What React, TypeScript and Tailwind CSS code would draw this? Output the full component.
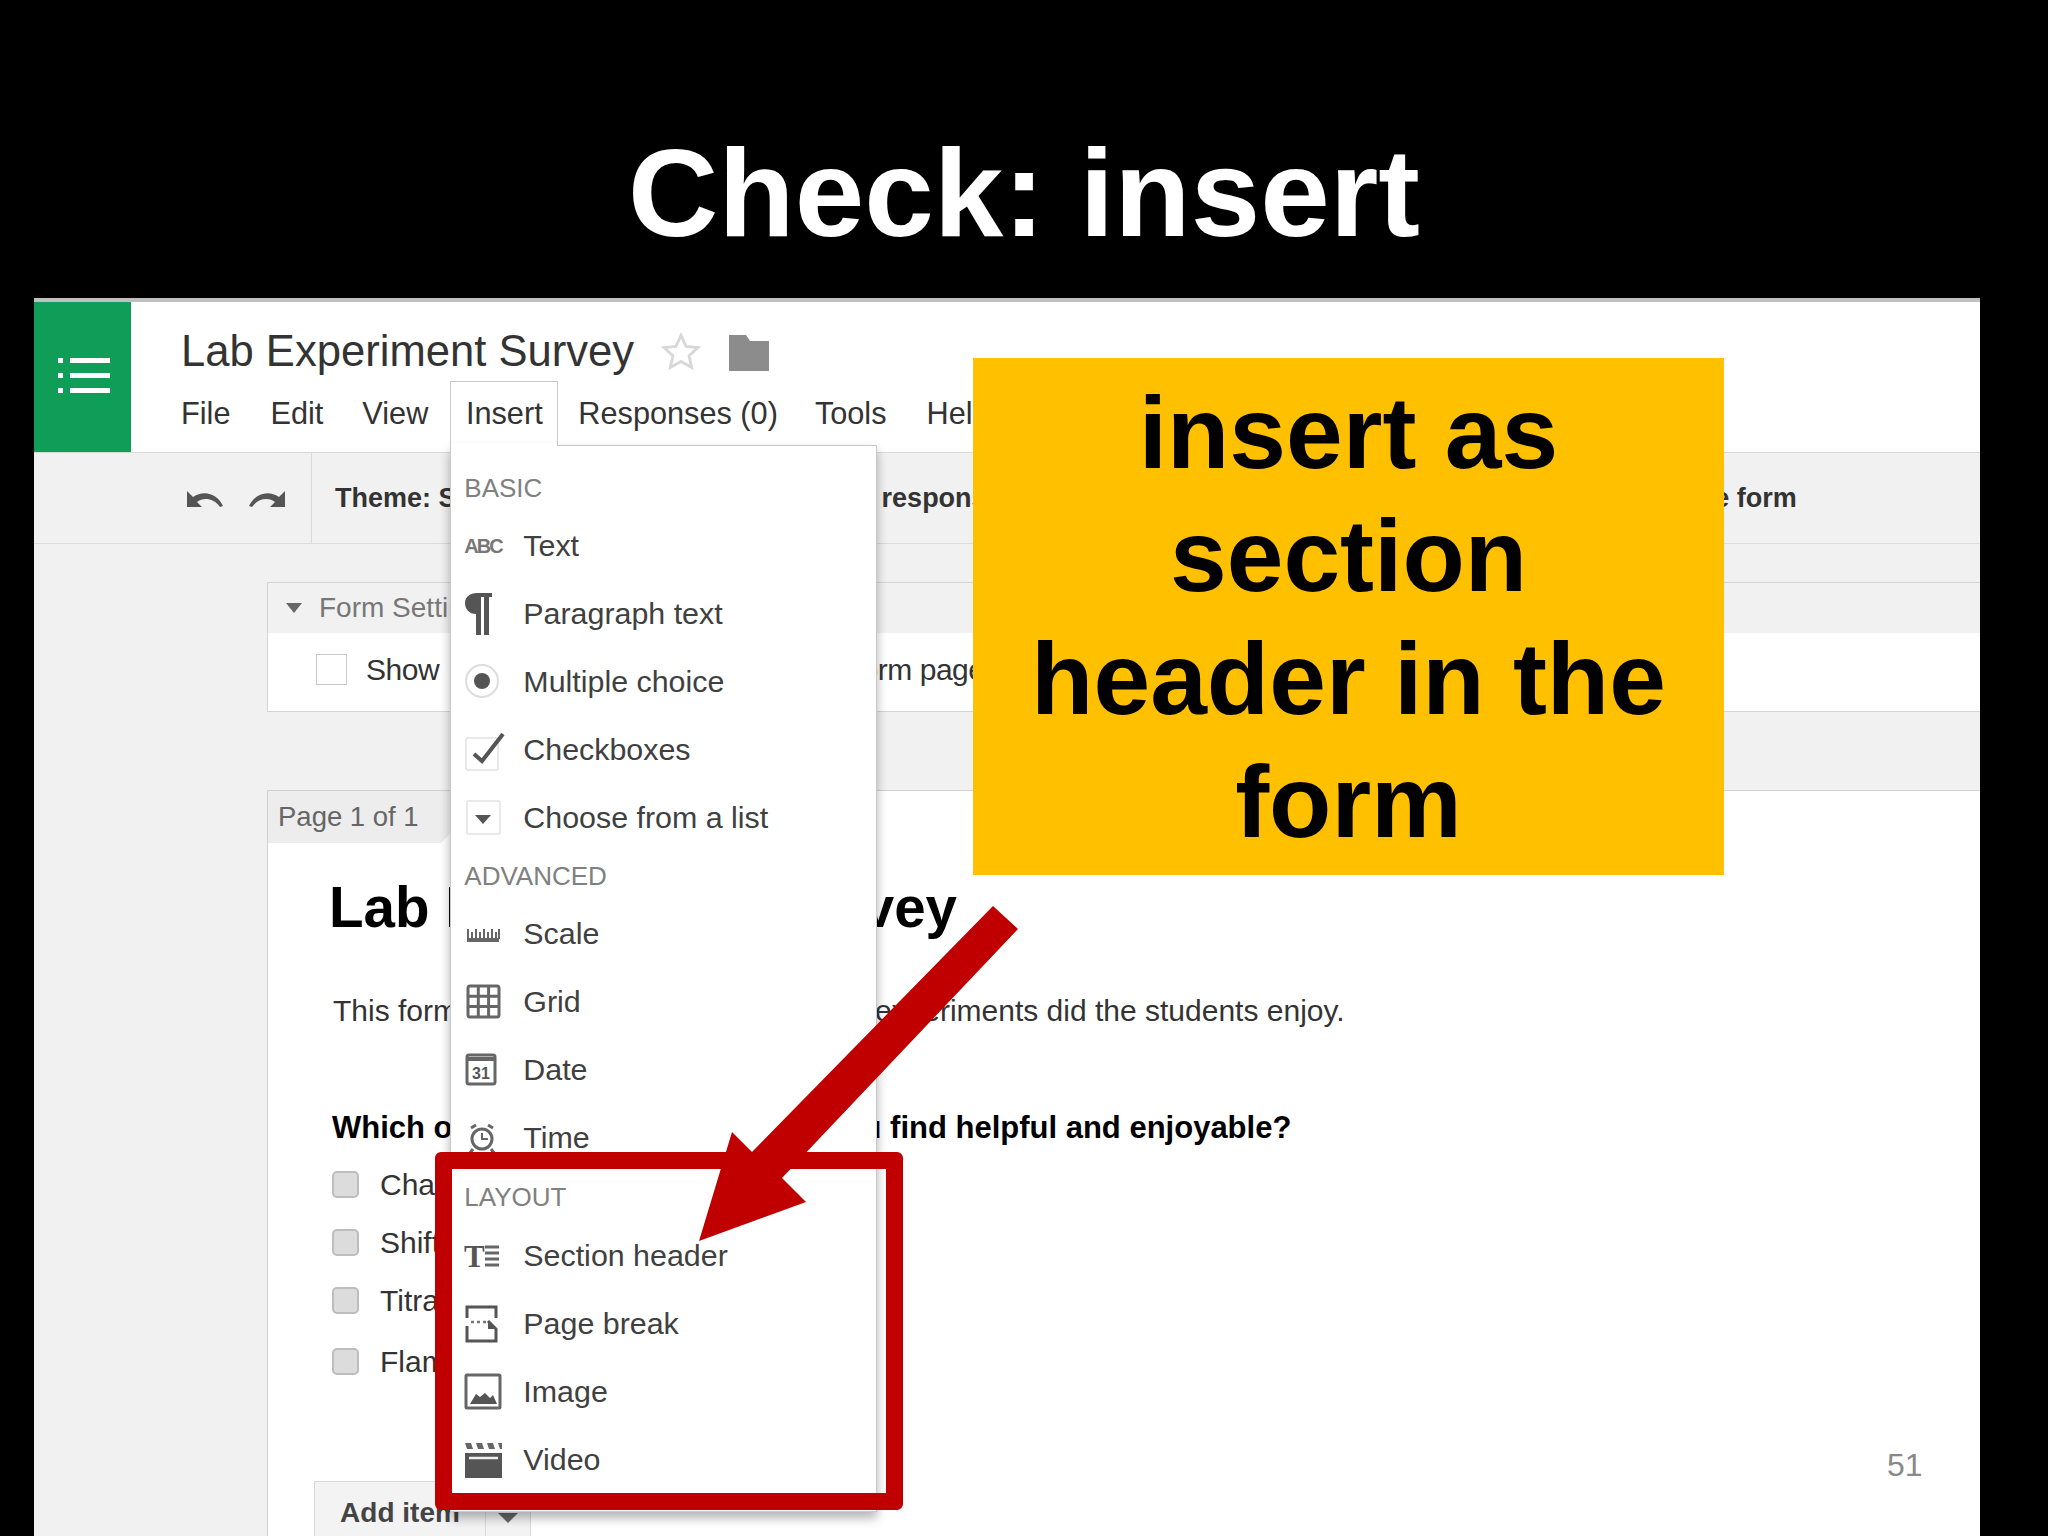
import { type ReactNode } from "react";

const IconAbc = () => (
  <span className="block w-[38px] font-bold text-[20px] leading-none tracking-[-2px] text-[#777]">ABC</span>
);

const IconParagraph = () => (
  <svg width="38" height="44" viewBox="0 0 38 44" className="block">
    <path d="M13 1h15v4h-3v38h-5V5h-3v38h-5V22C5 22 1 17 1 11S6 1 13 1z" fill="#555" />
  </svg>
);

const IconRadio = () => (
  <svg width="38" height="38" viewBox="0 0 38 38" className="block">
    <circle cx="18" cy="18" r="16" fill="#fff" stroke="#ddd" strokeWidth="2" />
    <circle cx="18" cy="18" r="8" fill="#555" />
  </svg>
);

const IconCheck = () => (
  <svg width="42" height="42" viewBox="0 0 42 42" className="block">
    <rect x="2" y="9" width="32" height="32" rx="2" fill="#fff" stroke="#e2e2e2" strokeWidth="1.5" />
    <path d="M10 25l8 7L39 5" fill="none" stroke="#555" strokeWidth="4" />
  </svg>
);

const IconSelect = () => (
  <svg width="38" height="38" viewBox="0 0 38 38" className="block">
    <rect x="3" y="2" width="33" height="33" rx="1" fill="#fff" stroke="#e2e2e2" strokeWidth="1.5" />
    <path d="M11 16h16l-8 9z" fill="#555" />
  </svg>
);

const IconScale = () => (
  <svg width="38" height="20" viewBox="0 0 38 20" className="block">
    <path d="M3 16h32" stroke="#666" strokeWidth="4" />
    <path
      d="M4 5v10M8 8v7M12 5v10M16 8v7M20 5v10M24 8v7M28 5v10M32 8v7M35 5v10"
      stroke="#666"
      strokeWidth="2"
    />
  </svg>
);

const IconGrid = () => (
  <svg width="38" height="38" viewBox="0 0 38 38" className="block">
    <rect x="4" y="3" width="31" height="31" rx="2" fill="none" stroke="#666" strokeWidth="3" />
    <path d="M14.3 3v31M24.6 3v31M4 13.3h31M4 23.6h31" stroke="#666" strokeWidth="3" />
  </svg>
);

const IconDate = () => (
  <svg width="38" height="38" viewBox="0 0 38 38" className="block">
    <rect x="3" y="4" width="28" height="29" rx="2" fill="#fff" stroke="#666" strokeWidth="3" />
    <path d="M3 8h28" stroke="#666" strokeWidth="4" />
    <text x="17" y="28" textAnchor="middle" fontSize="16" fontWeight="700" fill="#555" fontFamily="Liberation Sans">
      31
    </text>
  </svg>
);

const IconTime = () => (
  <svg width="38" height="38" viewBox="0 0 38 38" className="block">
    <circle cx="18" cy="20" r="10" fill="#fff" stroke="#666" strokeWidth="3" />
    <path d="M18 14v6h6" fill="none" stroke="#666" strokeWidth="2" />
    <path d="M7 9l5-3M29 9l-5-3M9 30l-3 4M27 30l3 4" stroke="#666" strokeWidth="3" />
  </svg>
);

const IconSection = () => (
  <svg width="38" height="28" viewBox="0 0 38 28" className="block">
    <text x="0" y="25" fontSize="31" fontWeight="700" fill="#555" fontFamily="Liberation Serif">
      T
    </text>
    <path d="M21 5h14M21 11h14M21 17h14M21 23h14" stroke="#666" strokeWidth="3" />
  </svg>
);

const IconPageBreak = () => (
  <svg width="38" height="38" viewBox="0 0 38 38" className="block">
    <path d="M3 13V2h29v11M3 21v15h29V24l-8-8" fill="none" stroke="#555" strokeWidth="3" />
    <path d="M7 17h3M13 17h3M19 17h3" stroke="#777" strokeWidth="2.5" />
    <path d="M24 16v8h8z" fill="#555" />
  </svg>
);

const IconImage = () => (
  <svg width="38" height="38" viewBox="0 0 38 38" className="block">
    <rect x="2" y="2" width="34" height="33" rx="1" fill="#fff" stroke="#666" strokeWidth="3" />
    <path d="M6 31l6-10 4 3 5-4 5 5 3-3 4 9z" fill="#555" />
  </svg>
);

const IconVideo = () => (
  <svg width="38" height="38" viewBox="0 0 38 38" className="block">
    <path d="M1 12h37v25H1z" fill="#555" />
    <path d="M1 2l6 0 2 6H3zM12 2h6l2 6h-6zM23 2h6l2 6h-6zM34 2h4v6h-2z" fill="#666" />
    <path d="M5 17h29" stroke="#eee" strokeWidth="2.5" />
  </svg>
);

const UndoArrow = ({ className }: { className?: string }) => (
  <svg width="36" height="18" viewBox="0 0 36 18" className={className}>
    <path d="M0 2v16h15l-5-5c6-5 17-4 23 5l3-1C31 6 18 0 6 8z" fill="#555" />
  </svg>
);

const MenuHeading = ({ label, height }: { label: string; height: string }) => (
  <div className={`flex items-center pl-[13px] text-[26px] text-[#808080] ${height}`}>{label}</div>
);

const MenuItem = ({ icon, label }: { icon: ReactNode; label: string }) => (
  <div className="flex h-[68px] items-center text-[30.4px] text-[#404040]">
    <div className="flex w-[72px] shrink-0 justify-start pl-[13px]">{icon}</div>
    <span>{label}</span>
  </div>
);

const InsertMenu = () => (
  <div className="absolute left-[-1px] top-[63px] z-10 h-[1067px] w-[427px] border border-[#c8c8c8] bg-white pt-[18px] shadow-[0_6px_10px_rgba(0,0,0,0.3)]">
    <MenuHeading label="BASIC" height="h-[48px]" />
    <MenuItem icon={<IconAbc />} label="Text" />
    <MenuItem icon={<IconParagraph />} label="Paragraph text" />
    <MenuItem icon={<IconRadio />} label="Multiple choice" />
    <MenuItem icon={<IconCheck />} label="Checkboxes" />
    <MenuItem icon={<IconSelect />} label="Choose from a list" />
    <MenuHeading label="ADVANCED" height="h-[48px]" />
    <MenuItem icon={<IconScale />} label="Scale" />
    <MenuItem icon={<IconGrid />} label="Grid" />
    <MenuItem icon={<IconDate />} label="Date" />
    <MenuItem icon={<IconTime />} label="Time" />
    <MenuHeading label="LAYOUT" height="h-[50px]" />
    <MenuItem icon={<IconSection />} label="Section header" />
    <MenuItem icon={<IconPageBreak />} label="Page break" />
    <MenuItem icon={<IconImage />} label="Image" />
    <MenuItem icon={<IconVideo />} label="Video" />
  </div>
);

const Header = () => (
  <div className="flex h-[151px] border-b border-[#d9d9d9] bg-white">
    <div className="flex w-[97px] shrink-0 items-center justify-center bg-[#0f9d58]">
      <svg width="52" height="35" viewBox="0 0 52 35" className="mb-[4px] ml-[3px]">
        <path d="M0 2.5h5M0 17.5h5M0 32.5h5M12 2.5h40M12 17.5h40M12 32.5h40" stroke="#fff" strokeWidth="5" />
      </svg>
    </div>
    <div className="flex-1 pl-[50px] text-[#333]">
      <div className="flex h-[79px] items-center pt-[20px]">
        <span className="text-[43.6px] leading-none">Lab Experiment Survey</span>
        <svg width="42" height="42" viewBox="0 0 24 24" className="ml-[26px]">
          <path
            d="M12 2.5l2.9 6.3 6.8.7-5.1 4.6 1.5 6.8-6.1-3.5-6.1 3.5 1.5-6.8L2.3 9.5l6.8-.7z"
            fill="#fff"
            stroke="#d8d8d8"
            strokeWidth="1.6"
          />
        </svg>
        <svg width="40" height="36" viewBox="0 0 40 36" className="ml-[27px] mt-[2px]">
          <path d="M0 0h17l4 6h19v30H0z" fill="#8c8c8c" />
        </svg>
      </div>
      <nav className="flex h-[66px] items-center text-[30.7px]">
        <span>File</span>
        <span className="ml-[40px]">Edit</span>
        <span className="ml-[39px]">View</span>
        <div className="relative z-20 ml-[22px] flex h-[64px] w-[108px] self-start items-center justify-center border border-b-0 border-[#c8c8c8] bg-white pt-[2px]">
          <span className="relative z-20">Insert</span>
          <InsertMenu />
          <div className="absolute bottom-[-2px] left-0 z-20 h-[4px] w-full bg-white" />
        </div>
        <span className="ml-[20px]">Responses (0)</span>
        <span className="ml-[37px]">Tools</span>
        <span className="ml-[40px]">Help</span>
      </nav>
    </div>
  </div>
);

const Toolbar = () => (
  <div className="flex h-[91px] items-center border-b border-[#dcdcdc] bg-[#f1f1f1] text-[27px] font-bold text-[#333]">
    <div className="flex h-full w-[278px] shrink-0 items-center gap-[26px] border-r border-[#d9d9d9] pl-[153px]">
      <UndoArrow />
      <UndoArrow className="-scale-x-100" />
    </div>
    <span className="ml-[23px]">Theme: Simple</span>
    <span className="ml-[299px]">See responses</span>
    <span className="ml-[599px]">View live form</span>
  </div>
);

const FormSettings = () => (
  <div className="h-[130px] border border-r-0 border-[#d4d4d4] bg-white">
    <div className="flex h-[50px] items-center bg-[#f1f1f1] pl-[18px] text-[28px] text-[#777]">
      <div className="h-0 w-0 border-x-[8px] border-t-[10px] border-x-transparent border-t-[#666]" />
      <span className="ml-[17px]">Form Settings</span>
    </div>
    <div className="flex h-[72px] items-center pl-[48px] text-[30px] tracking-[-0.47px] text-[#333]">
      <div className="h-[31px] w-[31px] border border-[#c8c8c8] bg-white" />
      <span className="ml-[19px]">Show</span>
      <span className="ml-[11px]">a progress bar at the bottom of form pages</span>
    </div>
  </div>
);

const Option = ({ label, className }: { label: string; className: string }) => (
  <div className={`flex h-[40px] items-center text-[30px] text-[#333] ${className}`}>
    <div className="h-[27px] w-[27px] rounded-[5px] border-2 border-[#bdbdbd] bg-[#dcdcdc]" />
    <span className="ml-[21px]">{label}</span>
  </div>
);

const PageCard = () => (
  <div className="mt-[78px] h-[746px] border-l border-t border-[#d0d0d0] bg-white">
    <div className="flex h-[52px] w-[225px] items-center bg-[#ededed] pl-[10px] text-[27.5px] text-[#666] [clip-path:polygon(0_0,100%_0,173px_100%,0_100%)]">
      Page 1 of 1
    </div>
    <div className="pl-[64px]">
      <h1 className="ml-[-3px] mt-[32px] text-[56.5px] font-bold leading-[66px] text-black">Lab Experiment Survey</h1>
      <p className="ml-[1px] mt-[50px] text-[30px] leading-[40px] text-[#333]">
        This form will determine which of the lab experiments did the students enjoy.
      </p>
      <p className="mt-[79px] text-[31px] font-bold leading-[36px] text-black">
        Which of the lab experiments did you find helpful and enjoyable?
      </p>
      <Option label="Change of state" className="mt-[18px]" />
      <Option label="Shift" className="mt-[18px]" />
      <Option label="Titration" className="mt-[18px]" />
      <Option label="Flame test" className="mt-[21px]" />
      <div className="ml-[-18px] mt-[100px] flex h-[60px] w-[217px] border border-[#d9d9d9] bg-[#f3f3f3] text-[#444]">
        <div className="flex w-[171px] items-start justify-center border-r border-[#d9d9d9] pt-[14px] text-[28px] font-bold leading-[34px]">
          Add item
        </div>
        <div className="flex flex-1 justify-center pt-[31px]">
          <div className="h-0 w-0 border-x-[10px] border-t-[10px] border-x-transparent border-t-[#666]" />
        </div>
      </div>
    </div>
  </div>
);

export default function App() {
  return (
    <div className="relative h-[1536px] w-[2048px] overflow-hidden bg-black font-['Liberation_Sans',Arial,sans-serif]">
      <div className="h-[298px] pt-[123px] text-center text-[125px] font-bold leading-[140px] text-white">
        Check: insert
      </div>

      <div className="ml-[34px] h-[1238px] w-[1946px] border-t-[4px] border-[#c0c0c0] bg-white">
        <Header />
        <Toolbar />
        <div className="h-[993px] bg-[#f1f1f1] pl-[233px] pt-[38px]">
          <FormSettings />
          <PageCard />
        </div>
      </div>

      {/* callout */}
      <div className="absolute left-[973px] top-[358px] z-30 flex h-[517px] w-[751px] items-center justify-center bg-[#ffc000] pt-[2px] text-center text-[102px] font-bold leading-[123px] text-black">
        <div>
          insert as
          <br />
          section
          <br />
          header in the
          <br />
          form
        </div>
      </div>

      {/* highlight frame */}
      <div className="absolute left-[435px] top-[1152px] z-30 h-[358px] w-[468px] rounded-[6px] border-[17px] border-[#c00000]" />

      {/* arrow */}
      <svg width="319" height="335" viewBox="0 0 319 335" className="absolute left-[699px] top-[906px] z-30">
        <path d="M294 0l25 23L83 272l24 24L0 335l33-109 20 20z" fill="#c00000" />
      </svg>

      <div className="absolute left-[1887px] top-[1447px] z-30 text-[32px] leading-[36px] text-[#898989]">51</div>
    </div>
  );
}
